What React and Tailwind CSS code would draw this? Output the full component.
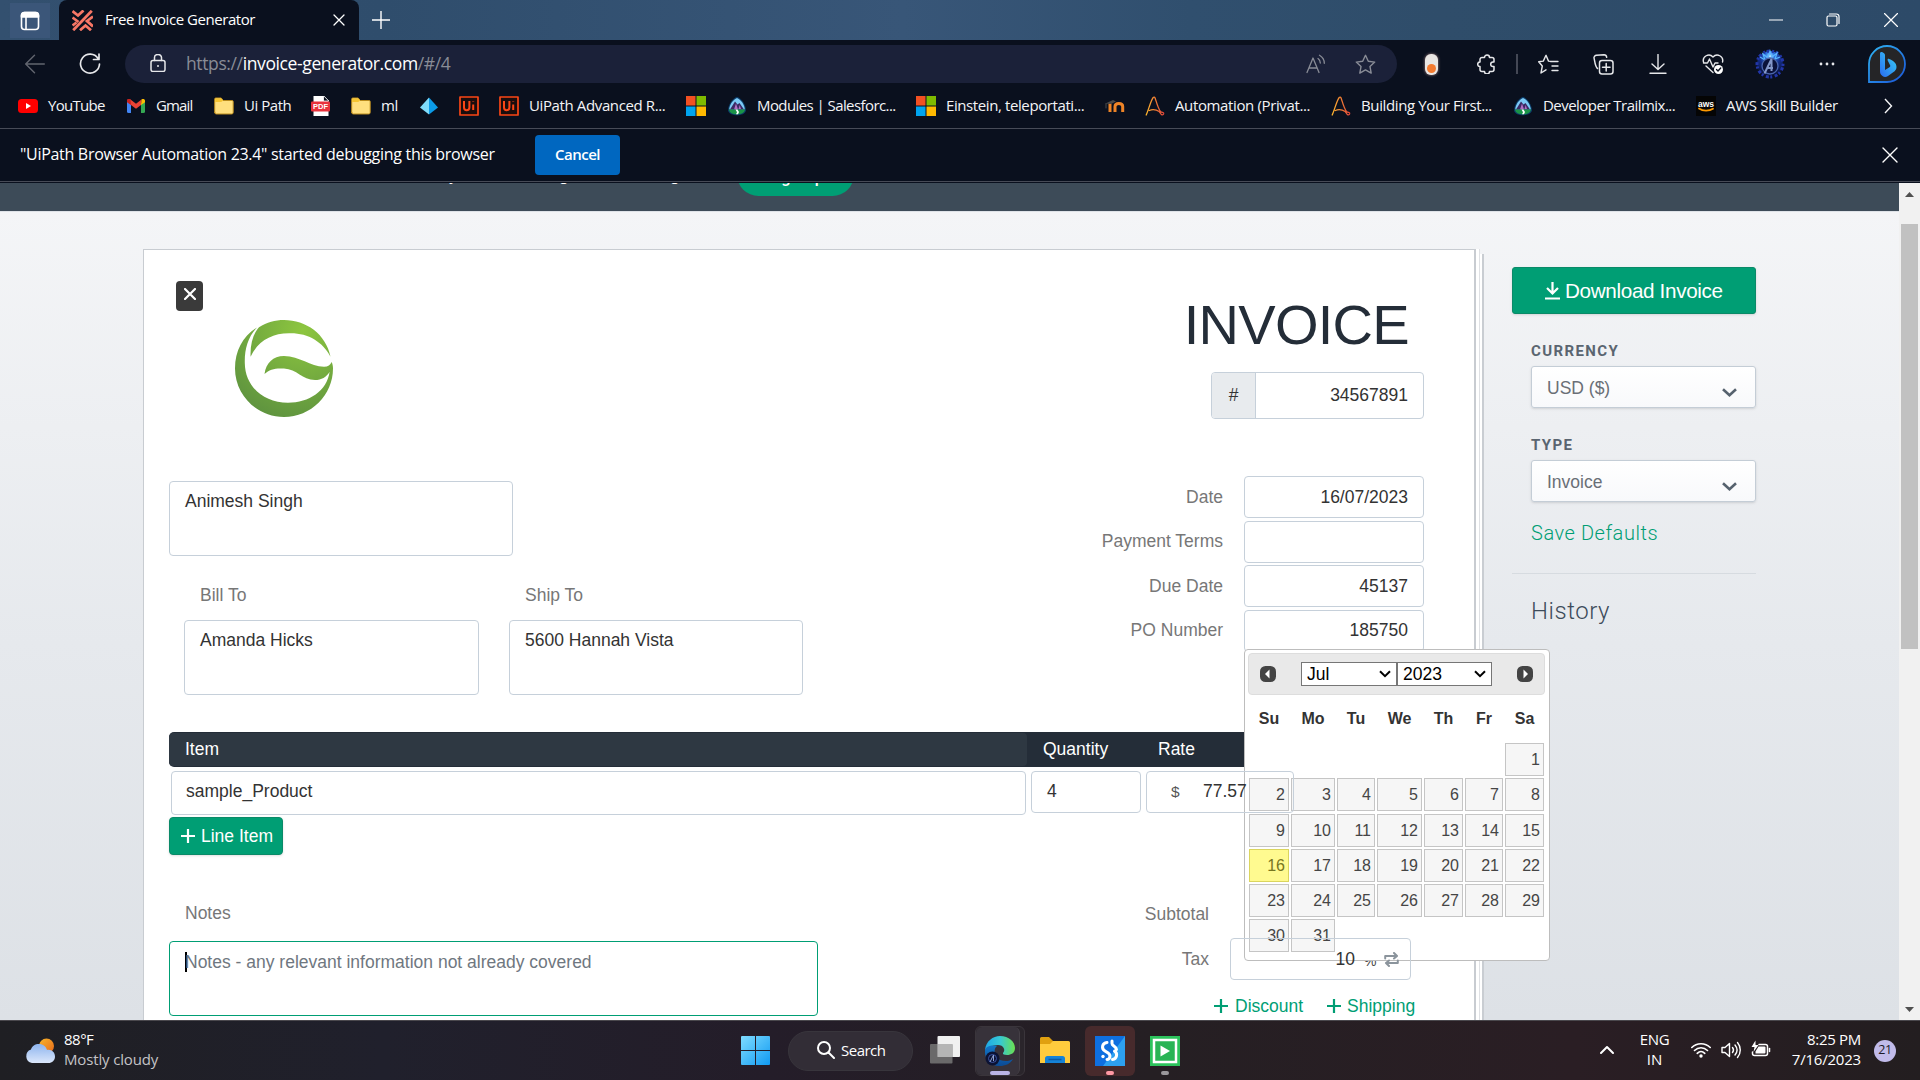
import React from "react";

const SEGOE = "font-['Open_Sans','Noto_Sans',sans-serif]";

/* ---------- small drawings ---------- */

const Svg = ({ s = 20, vb = 20, className = "", children, sw = 1.4 }) => (
  <svg
    width={s}
    height={s}
    viewBox={`0 0 ${vb} ${vb}`}
    fill="none"
    stroke="currentColor"
    strokeWidth={sw}
    strokeLinecap="round"
    strokeLinejoin="round"
    className={`shrink-0 ${className}`}
  >
    {children}
  </svg>
);

const YouTube = () => (
  <Svg><rect x="0" y="3" width="20" height="14" rx="3.5" fill="#ff0000" stroke="none" /><path d="M8 7l5 3-5 3z" fill="#fff" stroke="none" /></Svg>
);
const Gmail = () => (
  <Svg>
    <g stroke="none">
      <path d="M1 5v10.500a1.500 1.500 0 0 0 1.500 1.500H5V8z" fill="#4285f4" />
      <path d="M19 5v10.500a1.500 1.500 0 0 1-1.500 1.500H15V8z" fill="#34a853" />
      <path d="M1 5c0-2 2-2.500 3.500-1.500L10 7.700l5.500-4.200L15 9l-5 3.800L5 9z" fill="#ea4335" />
      <path d="M1 5c0-2 2-2.500 3.500-1.500L5 9 1 6.300z" fill="#c5221f" />
      <path d="M19 5c0-2-2-2.500-3.500-1.500L15 9l4-2.700z" fill="#fbbc04" />
    </g>
  </Svg>
);
const Folder = () => (
  <Svg>
    <path d="M.7 16.500V3a1 1 0 0 1 1-1h5.500l2 2.500h9a1 1 0 0 1 1 1v11a1.500 1.500 0 0 1-1.500 1.500H2.200a1.500 1.500 0 0 1-1.500-1.500z" fill="#ffdf7e" stroke="#b98a1c" strokeWidth="1" />
    <path d="M1.200 6h6l2-1.500-2-2H1.700l-.5.500z" fill="#f5c431" stroke="none" />
  </Svg>
);
const Pdf = () => (
  <Svg>
    <path d="M2.500 0h10l5 5v15h-15z" fill="#fff" stroke="none" /><path d="M12.500 0v5h5z" fill="#0b101d" stroke="#fff" strokeWidth=".8" />
    <rect x="0" y="5.500" width="19" height="10" rx="1" fill="#e8323c" stroke="none" />
    <text x="9.500" y="13.400" textAnchor="middle" fontSize="7.500" fontWeight="700" fill="#fff" stroke="none" fontFamily="Liberation Sans">PDF</text>
  </Svg>
);
const Diamond = () => (
  <Svg><g stroke="none"><path d="M10 1.500 1 11.500l9 7z" fill="#7fdcfb" /><path d="M10 1.500l9 10-9 7z" fill="#0b9be8" /></g></Svg>
);
const Ui = () => (
  <Svg>
    <rect x="1" y="1" width="18" height="18" fill="#1a0d0d" stroke="#fa4616" strokeWidth="1.700" />
    <path d="M5 5v6.500a2.700 2.700 0 0 0 5.400 0V5M14.200 8.500V14M14.200 5v.500" stroke="#fa4616" strokeWidth="2" strokeLinecap="butt" />
  </Svg>
);
const Ms = () => (
  <Svg><g stroke="none"><path fill="#f25022" d="M0 0h9.500v9.500H0z" /><path fill="#7fba00" d="M10.500 0H20v9.500h-9.500z" /><path fill="#00a4ef" d="M0 10.500h9.500V20H0z" /><path fill="#ffb900" d="M10.500 10.500H20V20h-9.500z" /></g></Svg>
);
const Trail = () => (
  <Svg>
    <g stroke="none">
      <path d="M10 .8c4.500 1.500 9 8 9 14-1 3-4.500 4.500-9 4.500S2 17.800 1 14.800C1 8.800 5.500 2.300 10 .8z" fill="#0b3b66" />
      <path d="M10 2c3.700 1.300 7.500 6.500 7.800 11.500H2.200C2.500 8.500 6.300 3.300 10 2z" fill="#7cc9f5" />
      <path d="M3 13.500 8 5.500l2.500 3 2-1.500 4.500 6.500z" fill="#3a2a63" /><path d="M7 13.500l2-6 2 6zM11.500 13l1.200-4 1.300 4z" fill="#b06fc4" />
      <path d="M2 13.500h16c-.4 3.500-4 4.800-8 4.800s-7.600-1.300-8-4.800z" fill="#1a9448" /><path d="M8.500 13.500h2l1.500 2.500-1 2.300H9l1-2z" fill="#fff" />
    </g>
  </Svg>
);
const Moodle = () => (
  <Svg><path d="M5 16V7.500M10 16v-5.500c0-4 7.700-4 7.700 0V16" stroke="#ee8427" strokeWidth="3" strokeLinecap="butt" /><path d="M.5 7.500 8 4l3 1.500-5 2.500z" fill="#4a4a4a" stroke="none" /><path d="M1 7.500V12" stroke="#4a4a4a" strokeWidth="1" /></Svg>
);
const Alpha = () => (
  <Svg>
    <defs><linearGradient id="alpha" x1="0" x2="1"><stop offset="0" stopColor="#ffb62e" /><stop offset="1" stopColor="#e2463a" /></linearGradient></defs>
    <path d="M1.200 19C3.500 14 6 4 8.200 1.500c.7-.8 1.500-.5 1.900.5 1.500 4.500 3 10.500 5.400 13.500 1.500 1.500 3.500.5 3.200 2.200-.3 1.500-2.200 1.500-2.900 0C14.500 14.500 9 12.500 4.300 14.500" stroke="url(#alpha)" strokeWidth="1.300" />
  </Svg>
);
const Aws = () => (
  <Svg>
    <rect width="20" height="20" fill="#050505" stroke="none" />
    <text x="10" y="10.500" textAnchor="middle" fontSize="8.500" fontWeight="700" fill="#fff" stroke="none" fontFamily="Liberation Sans">aws</text>
    <path d="M3 12.500c4 2.800 10 2.800 14 .2" stroke="#ff9900" strokeWidth="1.800" />
  </Svg>
);

const bookmarks = [
  { Icon: YouTube, label: "YouTube", w: "w-[108px]", t: "tracking-[-0.7px]" },
  { Icon: Gmail, label: "Gmail", w: "w-[88px]", t: "tracking-[-0.85px]" },
  { Icon: Folder, label: "Ui Path", w: "w-[97px]", t: "tracking-[-0.45px]" },
  { Icon: Pdf, w: "w-[40px]" },
  { Icon: Folder, label: "ml", w: "w-[68px]", t: "tracking-[-0.5px]" },
  { Icon: Diamond, w: "w-[40px]" },
  { Icon: Ui, w: "w-[40px]" },
  { Icon: Ui, label: "UiPath Advanced R...", w: "w-[187px]", t: "tracking-[-0.38px]" },
  { Icon: Ms, w: "w-[41px]" },
  { Icon: Trail, label: "Modules | Salesforc...", w: "w-[189px]", t: "tracking-[-0.58px]" },
  { Icon: Ms, label: "Einstein, teleportati...", w: "w-[189px]", t: "tracking-[-0.4px]" },
  { Icon: Moodle, w: "w-[40px]" },
  { Icon: Alpha, label: "Automation (Privat...", w: "w-[186px]", t: "tracking-[-0.37px]" },
  { Icon: Alpha, label: "Building Your First...", w: "w-[182px]", t: "tracking-[-0.38px]" },
  { Icon: Trail, label: "Developer Trailmix...", w: "w-[183px]", t: "tracking-[-0.53px]" },
  { Icon: Aws, label: "AWS Skill Builder", w: "w-[188px]", t: "tracking-[-0.3px]" },
];

/* ---------- browser chrome ---------- */

function TitleBar() {
  return (
    <div className="flex h-10 bg-[linear-gradient(90deg,#33506f_0%,#2f4d6c_20%,#385678_47%,#304f6e_62%,#2f4d6a_75%,#2d4a68_100%)] pl-2.5 text-white">
      <div className="mt-[3px] flex h-[35px] w-10 items-center justify-center bg-[#3b5679]">
        <Svg s={20} sw={1.600}><path d="M1.500 4.500a3 3 0 0 1 3-3h11a3 3 0 0 1 3 3V6h-17z" fill="currentColor" /><rect x="1.500" y="1.500" width="17" height="17" rx="3" /><path d="M6 6v12" /></Svg>
      </div>
      <div className="ml-[9px] flex w-[300px] items-center rounded-t-lg bg-[#0a101e] pl-[13px] pr-[13px]">
        <svg width="21" height="21" viewBox="0 0 21 21" className="shrink-0">
          <g fill="none" stroke="#f87766" strokeWidth="2.800">
            <path d="M19.800.8 1.200 20.200" />
            <path d="M.500 1.200 6 5.500 11.500.500" />
            <path d="M.500 7.500 6.500 12" />
            <path d="M21 6.500 15 11l6 5.500" />
            <path d="M8 20.200l5.500-4.700 5.500 4.700" />
            <path d="M.500 15.500l4-3" />
          </g>
        </svg>
        <span className={`ml-3 flex-1 -translate-y-px whitespace-nowrap text-[15px] tracking-[-0.44px] ${SEGOE}`}>Free Invoice Generator</span>
        <Svg s={14} vb={14} sw={1.300}><path d="M2 2l10 10M12 2 2 12" /></Svg>
      </div>
      <div className="ml-[13px] flex items-center"><Svg s={18} vb={18} sw={1.400}><path d="M9 0v18M0 9h18" /></Svg></div>
      <div className="flex-1" />
      <div className="flex items-center">
        <div className="flex w-[57px] justify-center"><Svg s={14} vb={14} sw={1.200}><path d="M.5 7h13" /></Svg></div>
        <div className="flex w-[58px] justify-center"><Svg s={14} vb={14} sw={1.200}><rect x="1" y="3" width="10" height="10" rx="1.500" /><path d="M3.500 1h7A2.500 2.500 0 0 1 13 3.500v7" /></Svg></div>
        <div className="flex w-[58px] justify-center"><Svg s={14} vb={14} sw={1.200}><path d="M.5.500l13 13M13.500.500l-13 13" /></Svg></div>
      </div>
    </div>
  );
}

function Toolbar() {
  return (
    <div className="flex h-[47px] items-center pl-[25px] pt-px text-[#e6e7ea]">
      <Svg s={20} className="text-[#62656f]"><path d="M.7 10h18.600M9.500 1.300.7 10l8.800 8.700" /></Svg>
      <Svg s={22} vb={22} className="ml-[34px]" sw={1.700}><path d="M19 5.500A9.500 9.500 0 1 0 20.500 11M20 1v5.500h-5.500" /></Svg>
      <div className="ml-[24px] flex h-[38px] w-[1272px] items-center rounded-full bg-[#1b2139] pl-6">
        <Svg s={18} vb={18} sw={1.500} className="-translate-y-px"><rect x="2" y="6.500" width="14" height="11" rx="2" /><path d="M5.500 6.500V3.500a3.500 3 0 0 1 7 0v3" /><circle cx="9" cy="12" r="1" fill="currentColor" stroke="none" /></Svg>
        <span className={`ml-[19px] flex-1 -translate-y-px whitespace-nowrap text-[17.500px] tracking-[-0.38px] text-[#898c96] ${SEGOE}`}>
          https://<span className="text-white">invoice-generator.com</span>/#/4
        </span>
        <Svg s={20} className="mr-[29px] text-[#898c96]" sw={1.300}><path d="M1 18.500 7 4l6 14.500M3 14h8M12 4.500c1.500 1 2.300 2.500 2.300 4.500M13.500 1.300c3 1.700 4.800 4.300 4.800 8" /></Svg>
        <Svg s={21} vb={21} className="mr-[21px] text-[#898c96]" sw={1.400}><path d="M10.500 1.300l2.800 6 6.400.8-4.700 4.500 1.200 6.500-5.700-3.200-5.700 3.200L6 12.600 1.300 8.100l6.400-.8z" /></Svg>
      </div>
      <div className="ml-[28px] flex h-[21px] w-[13px] items-end justify-center rounded-[6px] bg-[#e9e6e3] pb-[2px] shadow-[0_0_3px_#a88]"><div className="size-[9px] rounded-full bg-[#f47b30]" /></div>
      <Svg s={20} className="ml-[39px]" sw={1.500}><path d="M5 3.500h2.500a2.500 2.500 0 0 1 5 0H15A2 2 0 0 1 17 5.500V8h-1a2.300 2.300 0 0 0 0 4.600h1v2.900a2 2 0 0 1-2 2h-2.500a2.500 2.500 0 0 1-5 0H5a2 2 0 0 1-2-2v-2.900a2.300 2.300 0 0 1 0-4.600V5.500a2 2 0 0 1 2-2z" /></Svg>
      <div className="ml-[19px] h-5 w-0.5 bg-[#444855]" />
      <Svg s={21} vb={21} className="ml-[20px]" sw={1.400}><path d="M14 7.500l-3.500-.4L8 1.300 5.300 7.100l-4.600.7L4.300 12 3 19l5-3.200M12.500 7.500H20M14 12h6M14 16.500h6" /></Svg>
      <Svg s={21} vb={21} className="ml-[34px]" sw={1.500}><rect x="6.500" y="6.500" width="13.500" height="13.500" rx="2.500" /><path d="M13.200 9.500v7.500M9.500 13.200H17M4.500 14.500C2 13 1.500 5 1 4c-.2-1.500 1-2.500 2.500-2.700L11 .8c1.500 0 2.500 1 2.700 2.500" /></Svg>
      <Svg s={20} className="ml-[34px]" sw={1.400}><path d="M10 .5V15M4 10l6 5.500L16 10M2 19.300h16" /></Svg>
      <Svg s={22} vb={22} className="ml-[34px]" sw={1.400}><path d="M1.500 9C0 3.500 7-.5 11 4c4-4.500 11-.5 9.500 5M1.500 10h4l2-4 3.500 8 2-4h3M4 13l7 6.500" /><circle cx="16.500" cy="16.500" r="4.500" fill="#fff" stroke="none" /><path d="M14.500 16.500l1.500 1.500 2.700-3" stroke="#0a101e" /></Svg>
      <svg width="30" height="34" viewBox="0 0 30 34" className="ml-[31px] shrink-0">
        <defs><radialGradient id="avatar" cx=".5" cy=".2" r=".8"><stop offset="0" stopColor="#c5ecff" /><stop offset=".2" stopColor="#2f7be6" /><stop offset=".5" stopColor="#15308c" /><stop offset="1" stopColor="#070b25" /></radialGradient></defs>
        <circle cx="15" cy="17" r="13" fill="url(#avatar)" stroke="#2236a8" strokeWidth="3" strokeDasharray="2 1.500 3 2.500" />
        <path d="M5 10l5 3-2-6 5 4 2-7 2 6 5-4-2 6 5-2" fill="none" stroke="#5cb8ff" strokeWidth="1.200" />
        <circle cx="15" cy="19" r="8" fill="#0b123a" stroke="#4a65ad" strokeWidth="1.300" />
        <path d="M9.500 26.500 16.500 12v12M12 21h6" fill="none" stroke="#8497c9" strokeWidth="2" />
      </svg>
      <svg width="18" height="6" viewBox="0 0 18 6" className="ml-[33px] shrink-0" fill="currentColor"><circle cx="3" cy="3" r="1.400" /><circle cx="9" cy="3" r="1.400" /><circle cx="15" cy="3" r="1.400" /></svg>
      <svg width="38" height="38" viewBox="0 0 38 38" className="ml-[32px] shrink-0">
        <defs>
          <linearGradient id="bing" x1="0" y1="0" x2="1" y2="1"><stop offset="0" stopColor="#2fb5f3" /><stop offset="1" stopColor="#1b55d8" /></linearGradient>
          <linearGradient id="bingB" x1="0" y1="1" x2="1" y2="0"><stop offset="0" stopColor="#2a6bf0" /><stop offset="1" stopColor="#38d3f5" /></linearGradient>
        </defs>
        <path d="M1 37V19A18 18 0 1 1 19 37z" fill="#252527" stroke="url(#bing)" strokeWidth="1.800" />
        <path d="M12 8.500c0-1.500 1.200-2 2.500-1.200l1.500 1c.8.600 1 1.200 1 2.200V25l4.500-2.700c1-.8 1-1.800.2-2.800l-2-4c-.5-1.300.3-2 1.500-1.500 3.500 1.500 7.300 3.500 7.300 8 0 2.500-1.500 4-3 5l-5.500 4c-2 1.200-4 1.200-5.500 0-1.700-1.200-2.500-2.500-2.500-5z" fill="url(#bingB)" />
      </svg>
    </div>
  );
}

function Bookmarks() {
  return (
    <div className={`flex h-[42px] items-center border-b border-[#474b57] pl-[18px] pb-[4px] text-[15px] text-[#f4f4f6] ${SEGOE}`}>
      {bookmarks.map(({ Icon, label, w, t }, i) => (
        <div key={i} className={`flex shrink-0 items-center gap-2.5 whitespace-nowrap ${w}`}>
          <Icon />
          {label && <span className={t}>{label}</span>}
        </div>
      ))}
      <svg width="9" height="16" viewBox="0 0 9 16" fill="none" stroke="currentColor" strokeWidth="1.400"><path d="M1 1l6.500 7L1 15" /></svg>
    </div>
  );
}

function InfoBar() {
  return (
    <div className={`flex h-[54px] flex-col text-white ${SEGOE}`}>
      <div className="flex h-[53px] items-center border-b border-[#474b57] pl-5 text-[15px]">
        <span className="w-[515px] -translate-y-px whitespace-nowrap text-[16px] tracking-[-0.3px]">"UiPath Browser Automation 23.4" started debugging this browser</span>
        <div className="flex h-10 w-[85px] items-center justify-center rounded-sm bg-[#0067c0] pb-px font-semibold tracking-[-0.5px]">Cancel</div>
        <div className="flex-1" />
        <Svg s={16} vb={16} sw={1.400} className="mr-[22px]"><path d="M1 1l14 14M15 1 1 15" /></Svg>
      </div>
    </div>
  );
}

/* ---------- invoice page ---------- */

const field = "rounded-[4px] border border-[#c6d0da]";

function Logo() {
  return (
    <svg width="98" height="97" viewBox="0 0 98 97" className="ml-[91px] mt-[9px]">
      <defs>
        <radialGradient id="leaf" gradientUnits="userSpaceOnUse" cx="68" cy="10" r="92"><stop offset="0" stopColor="#8dc63f" /><stop offset="1" stopColor="#5f943f" /></radialGradient>
      </defs>
      <g fill="url(#leaf)">
        <path d="M15.600 36.700C15 25 18 14 24 7.200 32 2 40 0 49 0c22 0 42 14 46.500 36.700C88 22 73 13 55 13.300 37 13 23 21 15.600 36.700z" />
        <path d="M22 7.500C8 16 0 31 0 48.500 0 75 22 97 49 97s49-22 49-48.500c0-2.500-.5-5-1.500-6.500-1 3-3.500 4.700-7.500 4.700-14 0-24-10.700-40-10.700-11 0-18 7-19.500 18 5-5 11-6 19.500-5.500C62 49 67 60 80 60c6.500 0 11.500-3 14.600-8.300C92 71 74 82.700 53 82.700 28 82.700 10 66 9.800 43 9.500 29 13 17 22 7.500z" />
      </g>
    </svg>
  );
}

const details = [
  ["Date", "16/07/2023", "pt-px"],
  ["Payment Terms", "", "pt-0"],
  ["Due Date", "45137", "pt-px"],
  ["PO Number", "185750", "pb-px"],
];

const Plus = ({ s = 14 }) => (
  <svg width={s} height={s} viewBox="0 0 14 14" stroke="currentColor" strokeWidth="2.200" className="shrink-0"><path d="M7 0v14M0 7h14" /></svg>
);

function Paper() {
  return (
    <div className="relative ml-[143px] h-[800px] w-[1341px] shrink-0">
      <div className="absolute left-2 right-0 top-[5px] h-full border-r-2 border-[#c9cdd2] bg-white" />
      <div className="relative h-full w-[1337px] border-r border-[#dfe1e4] bg-white">
        <div className="relative flex h-full w-[1333px] flex-col border border-r-2 border-[#c8ccd1] bg-white">
          <div className="flex h-[482px] justify-between">
            <div className="flex flex-col items-start">
              <div className="ml-8 mt-[31px] flex h-[30px] w-[27px] justify-center rounded-[4px] bg-[#3a3a3a] pt-[7px] text-white">
                <Svg s={12} vb={12} sw={2.200}><path d="M1 1l10 10M11 1 1 11" /></Svg>
              </div>
              <Logo />
              <div className={`ml-[25px] mt-[64px] h-[75px] w-[344px] px-[15px] py-[6px] leading-[26px] ${field}`}>Animesh Singh</div>
              <div className="ml-10 mt-[26px] flex gap-[30px]">
                <div>
                  <div className="px-4 leading-[26px] text-[#777]">Bill To</div>
                  <div className={`mt-[12px] h-[75px] w-[295px] px-[15px] py-[6px] leading-[26px] ${field}`}>Amanda Hicks</div>
                </div>
                <div>
                  <div className="px-4 leading-[26px] text-[#777]">Ship To</div>
                  <div className={`mt-[12px] h-[75px] w-[294px] px-[15px] py-[6px] leading-[26px] ${field}`}>5600 Hannah Vista</div>
                </div>
              </div>
            </div>
            <div className="mr-[50px] flex flex-col items-end">
              <div className="mr-[15px] mt-[40px] text-[56px] leading-[70px] tracking-[-0.7px] text-[#242d38]">INVOICE</div>
              <div className={`mt-[12px] flex h-[47px] w-[213px] overflow-hidden ${field}`}>
                <div className="flex w-[44px] items-center justify-center border-r border-[#c6d0da] bg-[#e8ebee]">#</div>
                <div className="flex flex-1 items-center justify-end pb-px pr-[15px]">34567891</div>
              </div>
              <div className="mt-[57px] flex flex-col gap-[2.600px]">
                {details.map(([k, v, nudge]) => (
                  <div key={k} className="flex items-center justify-end">
                    <span className={`mr-[21px] leading-[25px] text-[#777] ${nudge}`}>{k}</span>
                    <div className={`flex h-[42px] w-[180px] items-center justify-end pr-[15px] leading-[25px] ${nudge} ${field}`}>{v}</div>
                  </div>
                ))}
              </div>
            </div>
          </div>

          <div className="ml-[25px] mr-[50px] flex h-[35px] items-center overflow-hidden rounded-[5px] bg-[#242d38] text-white">
            <div className="flex h-[33px] w-[858px] items-center rounded-[4px] bg-[#2e3842] pl-4">Item</div>
            <div className="w-[116px] pl-[16px]">Quantity</div>
            <div className="pl-[15px]">Rate</div>
          </div>
          <div className="relative z-20 ml-[27px] mt-1 flex items-start">
            <div className={`h-[44px] w-[855px] px-[14px] py-[7px] leading-[25px] ${field}`}>sample_Product</div>
            <div className={`ml-[5px] h-[42px] w-[110px] px-[15px] py-[7px] leading-[25px] ${field}`}>4</div>
            <div className={`ml-[5px] flex h-[42px] w-[148px] py-[7px] pl-6 leading-[25px] ${field}`}>
              <span className="w-[32px] text-[15.500px] text-[#555]">$</span>77.57
            </div>
          </div>
          <div className="ml-[25px] mt-[2px] flex h-[38px] w-[114px] items-center gap-[6px] rounded-[4px] border border-[#0a8a68] bg-[#009e74] pl-[11px] text-white shadow-sm"><Plus /><span className="whitespace-nowrap">Line Item</span></div>

          <div className="mt-[42px] flex">
            <div className="ml-[25px] w-[649px]">
              <div className="px-4 leading-[32px] text-[#777]">Notes</div>
              <div className="mt-[12px] flex h-[75px] rounded-[4px] border border-[#009e74] pl-[15px] pt-[10px]">
                <div className="h-5 w-0.5 bg-black" />
                <span className="-ml-0.5 leading-[20px] text-[#6f7780]">Notes - any relevant information not already covered</span>
              </div>
            </div>
            <div className="ml-[2px] flex w-[607px] flex-col">
              <div className="w-[389px] text-right leading-[34px] text-[#777]">Subtotal</div>
              <div className="mt-[7px] flex items-center">
                <span className="w-[389px] text-right text-[#777]">Tax</span>
                <div className={`relative z-20 ml-[21px] flex h-[42px] w-[181px] items-center justify-end ${field}`}>
                  <span>10</span>
                  <span className="ml-[9px] mt-[9px] flex h-[5px] w-[14px] items-end overflow-hidden text-[14px] leading-[10px] text-[#444]">%</span>
                  <Svg s={15} vb={15} sw={2} className="ml-[6px] mr-[11px] text-[#8b949c]"><path d="M1.200 6.500V4h11M10 1l3 3-3 2.500M13.800 8.500V11h-11M5 8.500 2 11l3 3" /></Svg>
                </div>
              </div>
              <div className="mt-[13px] flex items-center pl-[394px] text-[#009e74]">
                <Plus /><span className="ml-[7px] w-[92px]">Discount</span><Plus /><span className="ml-[6px]">Shipping</span>
              </div>
            </div>
          </div>
          <DatePicker />
        </div>
      </div>
    </div>
  );
}

const weeks = [
  ["", "", "", "", "", "", 1],
  [2, 3, 4, 5, 6, 7, 8],
  [9, 10, 11, 12, 13, 14, 15],
  [16, 17, 18, 19, 20, 21, 22],
  [23, 24, 25, 26, 27, 28, 29],
  [30, 31, "", "", "", "", ""],
];
const calGrid = "ml-px grid grid-cols-[40px_44px_38px_45px_39px_38px_39px] gap-x-[2px]";

const Chevron = ({ className = "", sw = 2 }) => (
  <svg width="12" height="8" viewBox="0 0 12 8" fill="none" stroke="currentColor" strokeWidth={sw} className={className}><path d="M1 1.200l5 5 5-5" /></svg>
);

function DatePicker() {
  return (
    <div className="absolute left-[1100px] top-[399px] z-10 h-[312px] w-[306px] rounded-[4px] border border-[#bdbdbd] bg-white p-[3px] text-[#333]">
      <div className="flex h-[42px] w-[297px] items-center rounded-[4px] border border-[#ddd] bg-[#e9e9e9] pl-[11px] pr-[11px] text-black">
        <svg width="16" height="16" viewBox="0 0 16 16" className="-mt-px"><rect width="16" height="16" rx="5.500" fill="#444" /><path d="M9.500 3.500v9L5 8z" fill="#fff" /></svg>
        <div className="ml-[25px] flex h-6 w-24 items-center justify-between border border-[#767676] bg-white pl-[5px] pr-[5px]">Jul<Chevron /></div>
        <div className="flex h-6 w-[95px] items-center justify-between border border-[#767676] bg-white pl-[5px] pr-[5px]">2023<Chevron /></div>
        <svg width="16" height="16" viewBox="0 0 16 16" className="-mt-px ml-auto"><rect width="16" height="16" rx="5.500" fill="#444" /><path d="M6.500 3.500v9L11 8z" fill="#fff" /></svg>
      </div>
      <div className={`mt-[11px] h-[26px] text-center text-[16px] font-bold leading-[26px] ${calGrid}`}>
        {["Su", "Mo", "Tu", "We", "Th", "Fr", "Sa"].map((d) => <span key={d}>{d}</span>)}
      </div>
      <div className={`mt-[11px] gap-y-[2.300px] text-right text-[16px] leading-[31px] text-[#454545] ${calGrid}`}>
        {weeks.flat().map((d, i) =>
          d === "" ? <span key={i} className="h-[33px]" /> : (
            <span key={i} className={`h-[33px] border pr-[3px] ${d === 16 ? "border-[#dad55e] bg-[#fffa90] text-[#777620]" : "border-[#c5c5c5] bg-[#f6f6f6]"}`}>{d}</span>
          )
        )}
      </div>
    </div>
  );
}

const SideSelect = ({ label, value, className }) => (
  <div className={`ml-[19px] ${className}`}>
    <div className="font-['Roboto',sans-serif] text-[15px] font-bold leading-[20px] tracking-[1.400px] text-[#5a6570]">{label}</div>
    <div className="mt-[5px] flex h-[42px] w-[225px] items-center justify-between rounded-[3px] border border-[#c4cdd6] bg-gradient-to-b from-white to-[#f8f9fb] pl-[15px] pr-[18px] text-[#6a6f76] shadow-sm">
      <span className="pt-[2px]">{value}</span>
      <svg width="15" height="10" viewBox="0 0 15 10" fill="none" stroke="#56626e" strokeWidth="2.600" className="mt-[12px]"><path d="M1 1.200l6.500 6 6.500-6" /></svg>
    </div>
  </div>
);

function Sidebar() {
  return (
    <div className="ml-[28px] w-[244px] pt-[18px]">
      <div className="flex h-[47px] items-center rounded-[3px] border border-[#0a8a68] bg-[#009e74] pl-8 text-[20.700px] text-white shadow">
        <svg width="15" height="18" viewBox="0 0 15 18" fill="none" stroke="currentColor" strokeWidth="2.200" className="mr-[5px] shrink-0"><path d="M7.500 0v11M2 6l5.500 5.500L13 6M0 16.500h15" /></svg>
        <span className="whitespace-nowrap tracking-[-0.35px]">Download Invoice</span>
      </div>
      <SideSelect label="CURRENCY" value="USD ($)" className="mt-[27px]" />
      <SideSelect label="TYPE" value="Invoice" className="mt-[27px]" />
      <div className="ml-[19px] mt-[18px] font-['Roboto',sans-serif] text-[20px] font-light leading-[26px] tracking-[0.550px] text-[#009e74]">Save Defaults</div>
      <div className="mt-[27px] h-px bg-[#d6dbe0]" />
      <div className="ml-[19px] mt-[22px] font-['Roboto',sans-serif] text-[24px] font-light leading-[30px] tracking-[0.550px] text-[#3d4b5a]">History</div>
    </div>
  );
}

function Page() {
  return (
    <div className="flex h-[837px] overflow-hidden font-['Liberation_Sans',Arial,sans-serif] text-[17.500px] text-[#333]">
      <div className="flex w-[1899px] flex-col bg-[linear-gradient(#f4f5f7_28px,#e6e9ed_460px,#dde1e6_837px)]">
        <div className="relative h-[29px] shrink-0 overflow-hidden border-b border-[#dfe3e8] bg-[#3d4b58] text-[17px] leading-5 text-white">
          <span className="absolute -top-[17px] left-[449px]">y</span>
          <span className="absolute -top-[17px] left-[559px]">g</span>
          <span className="absolute -top-[17px] left-[670px]">g</span>
          <div className="absolute -top-[30px] left-[737px] flex h-[43px] w-[117px] justify-center rounded-full bg-[#009e74] pt-[15px] font-['Roboto',sans-serif] text-[16.500px] font-medium">Sign Up</div>
        </div>
        <div className="flex pt-[37px]">
          <Paper />
          <Sidebar />
        </div>
      </div>
      <div className="flex w-[21px] flex-col items-center bg-[#f1f1f1]">
        <svg width="9" height="5" viewBox="0 0 9 5" className="mt-[9px]"><path d="M0 5 4.500 0 9 5z" fill="#505050" /></svg>
        <div className="mt-[27px] h-[425px] w-[17px] bg-[#c1c1c1]" />
        <svg width="9" height="5" viewBox="0 0 9 5" className="mb-2 mt-auto"><path d="M0 0h9L4.500 5z" fill="#505050" /></svg>
      </div>
    </div>
  );
}

/* ---------- taskbar ---------- */

function Taskbar() {
  return (
    <div className={`flex h-[60px] items-center border-t border-[#4a484d] bg-[linear-gradient(90deg,#1f1f23_0%,#20202c_20%,#241d29_40%,#251f23_60%,#2a1e24_82%,#231e20_100%)] text-[15px] text-white ${SEGOE}`}>
      <svg width="30" height="26" viewBox="0 0 30 26" className="ml-[25px] shrink-0">
        <defs>
          <linearGradient id="sun" x1="0" y1="0" x2="1" y2="1"><stop offset="0" stopColor="#f7b52b" /><stop offset="1" stopColor="#e8691a" /></linearGradient>
          <linearGradient id="cloud" x1="0" y1="0" x2="0" y2="1"><stop offset="0" stopColor="#8db4ee" /><stop offset="1" stopColor="#dbe7fb" /></linearGradient>
        </defs>
        <circle cx="21.500" cy="8" r="7.500" fill="url(#sun)" />
        <path d="M7 25a7 7 0 0 1-1-13.500C7 8 10 6 14 6c4 0 7 2.500 8 6 4-1 8 2 8 6.500 0 4-3 6.500-6.500 6.500z" fill="url(#cloud)" />
      </svg>
      <div className="-mt-1 ml-[9px] w-[677px] leading-[20px]">
        <div className="tracking-[-0.5px]">88°F</div>
        <div className="tracking-[-0.15px] text-[#c4c3c6]">Mostly cloudy</div>
      </div>
      <svg width="29" height="29" viewBox="0 0 29 29" className="shrink-0">
        <defs><linearGradient id="win" x1="0" y1="0" x2="1" y2="1"><stop offset="0" stopColor="#7fdcff" /><stop offset="1" stopColor="#109af2" /></linearGradient></defs>
        <path d="M0 1a1 1 0 0 1 1-1h13v14H0zM15 0h13a1 1 0 0 1 1 1v13H15zM0 15h14v14H1a1 1 0 0 1-1-1zM15 15h14v13a1 1 0 0 1-1 1H15z" fill="url(#win)" />
      </svg>
      <div className="ml-[18px] flex h-10 w-[125px] items-center rounded-full border border-[#38353c] bg-[#322d36] pb-px pl-[28px]">
        <Svg s={18} vb={18} sw={2}><circle cx="7" cy="7" r="6" /><path d="M11.500 11.500l5.500 5.500" /></Svg>
        <span className="ml-[6px] tracking-[-0.5px]">Search</span>
      </div>
      <svg width="30" height="28" viewBox="0 0 30 28" className="-mt-px ml-[17px] shrink-0"><rect x="7.500" width="22.500" height="21" rx="1" fill="#f0f0f0" /><rect y="8" width="22.500" height="19.500" rx="1" fill="#777" fillOpacity=".85" /><rect x="7.500" y="8" width="15" height="13" fill="#b5b5b5" /></svg>
      <div className="ml-[15px] flex h-[50px] w-[50px] rounded-md border border-[#3a353b] bg-[#2a252b]">
        <div className="relative flex h-full w-11 flex-col items-center rounded-md border-r border-[#454047] bg-[#37323a] pt-[9px]">
          <svg width="30" height="30" viewBox="0 0 30 30" className="ml-[4px] shrink-0">
            <defs>
              <linearGradient id="edgeA" x1="0" x2="1"><stop offset="0" stopColor="#1ea7e6" /><stop offset=".5" stopColor="#36c8d5" /><stop offset="1" stopColor="#6be04f" /></linearGradient>
              <linearGradient id="edgeB" x1="0" y1="0" x2="0" y2="1"><stop offset="0" stopColor="#1377c9" /><stop offset="1" stopColor="#0b4a94" /></linearGradient>
            </defs>
            <path d="M0 14C1 5 8 0 15 0c9 0 15 6 15 12 0 5-4 7-8 7-3 0-4.500-1-4-2 3-3 .5-8-5-8-6 0-10 3-13 5z" fill="url(#edgeA)" />
            <path d="M0 14c2-5 8-5 12-4-4 3-3 11 3 14 5 2 10 1 13-1-3 5-8 7-13 7C6 30-1 23 0 14z" fill="url(#edgeB)" />
            <circle cx="7.500" cy="22.500" r="7" fill="#0c1334" /><circle cx="7.500" cy="22.500" r="4" fill="none" stroke="#3c55a5" /><path d="M5 26 8.500 19v6" stroke="#8fa2d6" fill="none" />
          </svg>
          <div className="absolute bottom-0 left-[14px] h-1 w-5 rounded-full bg-[#b9b3e6]" />
        </div>
      </div>
      <svg width="30" height="27" viewBox="0 0 30 27" className="ml-[15px] shrink-0">
        <path d="M0 1.500A1.500 1.500 0 0 1 1.500 0H9l4 4h15v8H0z" fill="#e0a010" /><path d="M0 7h10l3-3h15.500A1.500 1.500 0 0 1 30 5.500V26H0z" fill="#ffcb3d" /><path d="M5 26v-4.500A2.500 2.500 0 0 1 7.500 19h15a2.500 2.500 0 0 1 2.500 2.500V26z" fill="#1583d8" /><path d="M8.500 22.500h13" stroke="#0d5ba5" strokeWidth="1.500" />
      </svg>
      <div className="relative ml-[15px] flex size-[50px] justify-center rounded-md bg-[#472a2c] pt-[10px]">
        <svg width="30" height="30" viewBox="0 0 30 30">
          <rect width="30" height="30" fill="#0f6fe0" /><path d="M30 0v30H8z" fill="#2da0f0" />
          <g fill="none" stroke="#fff" strokeWidth="3" strokeLinecap="round"><path d="M12 6.500c-5 .5-6 6-2 8.500l3.500 2.300c2.500 2 1.500 6-1.500 6.200" /><path d="M17 5v2.500c0 2.500 4 2.500 4.500 6M17.500 23.500c4.500-1 5.500-6 2-8.500" /></g>
          <circle cx="8" cy="20.500" r="1.700" fill="#fff" />
        </svg>
        <div className="absolute bottom-[1px] h-1 w-2 rounded-full bg-[#ff99a4]" />
      </div>
      <div className="relative ml-[15px] flex h-[50px] justify-center pt-[10px]">
        <svg width="30" height="30" viewBox="0 0 30 30"><rect width="30" height="30" fill="#2cc35c" /><rect x="4" y="4" width="22" height="22" fill="#29b455" stroke="#fff" strokeWidth="2.500" /><path d="M10.500 9.500v11l9.500-5.500z" fill="#fff" /></svg>
        <div className="absolute bottom-[1px] h-1 w-2 rounded-full bg-[#9a979b]" />
      </div>
      <div className="flex-1" />
      <Svg s={14} vb={14} sw={2}><path d="M1 9l6-6 6 6" /></Svg>
      <div className="-mt-[3px] ml-[20px] w-[41px] text-center leading-[20px]"><div className="tracking-[-0.4px]">ENG</div><div>IN</div></div>
      <Svg s={20} className="-mt-[2px] ml-[16px]" sw={1.600}><path d="M.8 7.500c5-5 13.400-5 18.400 0M3.500 10.500c3.700-3.700 9.300-3.700 13 0M6.200 13.300c2.300-2.200 5.300-2.200 7.600 0" /><circle cx="10" cy="16" r="1.700" fill="currentColor" stroke="none" /></Svg>
      <Svg s={20} className="-mt-[2px] ml-[10px]" sw={1.400}><path d="M1 7.500h3l4.500-4v13L4 12.500H1zM11.500 7.500c1.200 1.500 1.200 3.500 0 5M14 5c2.500 3 2.500 7 0 10M16.500 2.500c3.700 4.500 3.700 10.500 0 15" /></Svg>
      <Svg s={20} className="-mt-[2px] ml-[10px]" sw={1.500}><path d="M8 4.500h6.500a2 2 0 0 1 2 2v7a2 2 0 0 1-2 2h-11a2 2 0 0 1-2-2V12" /><path d="M7.500 6.500h6a1 1 0 0 1 1 1v5a1 1 0 0 1-1 1h-9v-2z" fill="currentColor" stroke="none" /><path d="M18.500 8.500v3" /><path d="M4.500.500.500 7h3L2.500 12l5-7h-3z" fill="currentColor" stroke="none" /></Svg>
      <div className="-mt-1 ml-[14px] w-[76px] whitespace-nowrap text-right leading-[20px]"><div className="tracking-[-0.3px]">8:25 PM</div><div className="tracking-[-0.2px]">7/16/2023</div></div>
      <div className="ml-[13px] mr-[24px] flex size-[22px] items-center justify-center rounded-full bg-[#c1bbea] text-[12.500px] tracking-[-0.5px] text-[#1c1a26]">21</div>
    </div>
  );
}

export default function App() {
  return (
    <div className="h-[1080px] w-[1920px] overflow-hidden bg-[#0a101e]">
      <TitleBar />
      <Toolbar />
      <Bookmarks />
      <InfoBar />
      <Page />
      <Taskbar />
    </div>
  );
}
